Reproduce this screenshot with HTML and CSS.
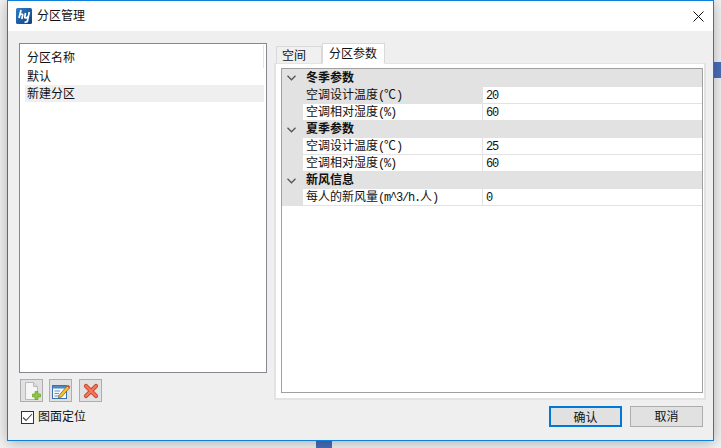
FILE: index.html
```html
<!DOCTYPE html>
<html lang="zh-CN">
<head>
  <meta charset="UTF-8">
  <title>分区管理</title>
  <link rel="stylesheet" href="styles.css">
</head>
<body>
  <div class="mark mark-right"></div>
  <div class="mark mark-bottom"></div>

  <div class="dialog">
    <div class="titlebar">
      <svg class="logo" width="16" height="16" viewBox="0 0 16 16">
        <defs>
          <linearGradient id="logoFill" x1="0" y1="0" x2="1" y2="1">
            <stop offset="0" stop-color="#2f7fc8"/>
            <stop offset="1" stop-color="#0d3f80"/>
          </linearGradient>
        </defs>
        <rect width="16" height="16" rx="1.5" fill="url(#logoFill)"/>
        <path d="M5 2 L3 10 M3.6 7.5 C5 5.5 7 5.5 6.6 7.5 L5.8 11" fill="none" stroke="#fff" stroke-width="1.7"/>
        <path d="M9.5 5 L8.8 9 C8.6 10.5 11 10.2 12 8.5 M13.3 4 L11.3 13.5 L8.5 14.5" fill="none" stroke="#fff" stroke-width="1.7"/>
      </svg>
      <span class="title">分区管理</span>
      <svg class="close" width="11" height="11" viewBox="0 0 11 11">
        <path d="M0.5 0.5 L10.5 10.5 M10.5 0.5 L0.5 10.5" stroke="#111" stroke-width="1"/>
      </svg>
    </div>

    <div class="content">
      <div class="left">
        <div class="list">
          <div class="list-head">分区名称</div>
          <div class="list-row">默认</div>
          <div class="list-row selected">新建分区</div>
        </div>
        <div class="tools">
          <button class="tool">
            <svg width="18" height="20" viewBox="0 0 18 20">
              <path d="M2.5 1.5 H10.5 L14.5 5.5 V18.5 H2.5 Z" fill="#f6f6f6" stroke="#b9b9b9"/>
              <path d="M10.5 1.5 V5.5 H14.5" fill="#ddd" stroke="#b9b9b9"/>
              <path d="M12 10.5 H15 V13 H17.5 V16 H15 V18.5 H12 V16 H9.5 V13 H12 Z" fill="#8cc63f" stroke="#5f9a1e" stroke-width="0.6"/>
            </svg>
          </button>
          <button class="tool">
            <svg width="20" height="18" viewBox="0 0 20 18">
              <rect x="1.5" y="3.5" width="14" height="13" fill="#f4f8fd" stroke="#3f6fae"/>
              <rect x="2" y="4" width="13" height="2.5" fill="#4f86c6"/>
              <path d="M3.5 9 H9 M3.5 11.5 H8 M3.5 14 H9" stroke="#6f93bf"/>
              <path d="M8 13.5 L16 4 L18.5 6 L10.5 15 L7.5 16 Z" fill="#f2c230" stroke="#6d5a20" stroke-width="0.7"/>
              <path d="M16 4 L17 2.8 L19.3 4.8 L18.5 6 Z" fill="#c9473a"/>
            </svg>
          </button>
          <button class="tool">
            <svg width="16" height="16" viewBox="0 0 16 16">
              <path d="M3 3 L13 13 M13 3 L3 13" stroke="#c8452c" stroke-width="4.2" stroke-linecap="round"/>
              <path d="M3 3 L13 13 M13 3 L3 13" stroke="#f4775a" stroke-width="2.4" stroke-linecap="round"/>
            </svg>
          </button>
        </div>
        <label class="check">
          <span class="box">
            <svg width="11" height="9" viewBox="0 0 11 9">
              <path d="M1 4.5 L4 7.5 L10 1" fill="none" stroke="#444" stroke-width="1.1"/>
            </svg>
          </span>
          <span class="check-text">图面定位</span>
        </label>
      </div>

      <div class="right">
        <div class="tabs">
          <div class="tab">空间</div>
          <div class="tab active">分区参数</div>
        </div>
        <div class="panel">
          <div class="grid">
            <div class="group">
              <svg class="chevron" width="9" height="6" viewBox="0 0 9 6"><path d="M0.5 0.8 L4.5 4.8 L8.5 0.8" fill="none" stroke="#555" stroke-width="1.3"/></svg>
              冬季参数
            </div>
            <div class="row current"><div class="name">空调设计温度<span class="latin">(</span>℃<span class="latin">)</span></div><div class="value"><span class="latin">20</span></div></div>
            <div class="row"><div class="name">空调相对湿度<span class="latin">(%)</span></div><div class="value"><span class="latin">60</span></div></div>
            <div class="group">
              <svg class="chevron" width="9" height="6" viewBox="0 0 9 6"><path d="M0.5 0.8 L4.5 4.8 L8.5 0.8" fill="none" stroke="#555" stroke-width="1.3"/></svg>
              夏季参数
            </div>
            <div class="row"><div class="name">空调设计温度<span class="latin">(</span>℃<span class="latin">)</span></div><div class="value"><span class="latin">25</span></div></div>
            <div class="row"><div class="name">空调相对湿度<span class="latin">(%)</span></div><div class="value"><span class="latin">60</span></div></div>
            <div class="group">
              <svg class="chevron" width="9" height="6" viewBox="0 0 9 6"><path d="M0.5 0.8 L4.5 4.8 L8.5 0.8" fill="none" stroke="#555" stroke-width="1.3"/></svg>
              新风信息
            </div>
            <div class="row"><div class="name">每人的新风量<span class="latin">(m^3/h.</span>人<span class="latin">)</span></div><div class="value"><span class="latin">0</span></div></div>
          </div>
        </div>
        <div class="footer">
          <button class="btn primary">确认</button>
          <button class="btn">取消</button>
        </div>
      </div>
    </div>
  </div>
</body>
</html>
```

FILE: styles.css
```css
html, body {
  margin: 0;
  padding: 0;
}
body {
  position: relative;
  width: 721px;
  height: 448px;
  overflow: hidden;
  background: #f4f4f4;
  font-family: "Noto Sans CJK SC", "Liberation Sans", sans-serif;
  font-size: 12px;
  color: #111;
}
.mark {
  position: absolute;
  background: #4a6fbd;
}
.mark-right {
  left: 714px;
  top: 62px;
  width: 7px;
  height: 16px;
}
.mark-bottom {
  left: 316px;
  top: 441px;
  width: 16px;
  height: 7px;
}
.dialog {
  position: relative;
  box-sizing: border-box;
  width: 707px;
  height: 441px;
  margin-left: 7px;
  border: 1px solid #0f7fd8;
  background: #efefef;
  box-shadow: 0 2px 14px rgba(0, 0, 0, 0.3);
  display: flex;
  flex-direction: column;
}
.titlebar {
  height: 30px;
  flex: none;
  background: #fff;
  display: flex;
  align-items: center;
  padding: 0 9px 0 8px;
}
.logo {
  margin-right: 5px;
}
.title {
  flex: 1;
  line-height: 28px;
  margin-bottom: 2px;
}
.content {
  flex: 1;
  display: flex;
  gap: 7px;
  padding: 12px 7px 0 11px;
}
.left {
  width: 248px;
  display: flex;
  flex-direction: column;
}
.list {
  box-sizing: border-box;
  height: 330px;
  border: 1px solid #87878f;
  background: #fff;
  padding: 1px 1px 0 5px;
}
.list-head {
  height: 23px;
  line-height: 24px;
  padding-left: 2px;
  border-right: 1px solid #e4e4e4;
  margin-right: 1px;
}
.list-row {
  height: 17px;
  line-height: 16px;
  padding-left: 2px;
  margin-right: 1px;
}
.selected {
  background: #efefef;
}
.tools {
  display: flex;
  gap: 6px;
  margin: 6px 0 0 1px;
}
.tools .tool:last-child {
  margin-left: 1px;
}
.tool {
  box-sizing: border-box;
  width: 23px;
  height: 23px;
  padding: 0;
  border: 1px solid #adadad;
  background: #e1e1e1;
  display: flex;
  align-items: center;
  justify-content: center;
}
.check {
  display: flex;
  align-items: center;
  gap: 4px;
  margin: 7px 0 0 2px;
  height: 17px;
}
.check-text {
  margin-bottom: 4px;
}
.box {
  box-sizing: border-box;
  width: 13px;
  height: 13px;
  border: 1px solid #333;
  background: #fff;
  display: flex;
  align-items: center;
  justify-content: center;
}
.right {
  flex: 1;
  display: flex;
  flex-direction: column;
}
.tabs {
  display: flex;
  align-items: flex-end;
  height: 21px;
  padding-left: 2px;
  position: relative;
  z-index: 1;
  margin-bottom: -1px;
}
.tab {
  box-sizing: border-box;
  width: 46px;
  height: 18px;
  line-height: 16px;
  padding-left: 5px;
  border: 1px solid #d9d9d9;
  border-bottom: 1px solid #e3e3e3;
  background: #f0f0f0;
}
.tab.active {
  width: 63px;
  height: 21px;
  line-height: 17px;
  padding-left: 6px;
  background: #fff;
  border-bottom: 1px solid #fff;
}
.panel {
  box-sizing: border-box;
  height: 337px;
  border: 2px solid #e3e3e3;
  border-top-width: 1px;
  background: #fff;
  padding: 4px 1px 5px 5px;
}
.grid {
  box-sizing: border-box;
  height: 100%;
  border: 1px solid #a0a0a0;
  background: #fff;
}
.group {
  box-sizing: border-box;
  height: 17px;
  padding: 0 0 4px 5px;
  background: #e2e2e2;
  font-weight: 700;
  display: flex;
  align-items: center;
}
.group:first-child {
  height: 18px;
}
.chevron {
  margin: 4px 10px 0 0;
}
.row {
  box-sizing: border-box;
  height: 17px;
  line-height: 13px;
  display: flex;
  margin-left: 21px;
  border-bottom: 1px solid #e2e2e2;
  box-shadow: -21px 0 0 #e2e2e2;
}
.name {
  box-sizing: border-box;
  width: 179px;
  padding-left: 3px;
  white-space: nowrap;
}
.current .name {
  background: #e2e2e2;
}
.value {
  flex: 1;
  padding-left: 3px;
  border-left: 1px solid #e2e2e2;
}
.latin {
  font-family: "Liberation Mono", monospace;
  letter-spacing: -1.2px;
}
.footer {
  display: flex;
  justify-content: flex-end;
  gap: 8px;
  margin-top: 6px;
  padding-right: 3px;
}
.btn {
  box-sizing: border-box;
  width: 73px;
  height: 21px;
  padding: 0 0 6px;
  border: 1px solid #adadad;
  background: #e1e1e1;
  font: inherit;
  color: #111;
}
.btn.primary {
  border: 2px solid #0078d7;
}
```
